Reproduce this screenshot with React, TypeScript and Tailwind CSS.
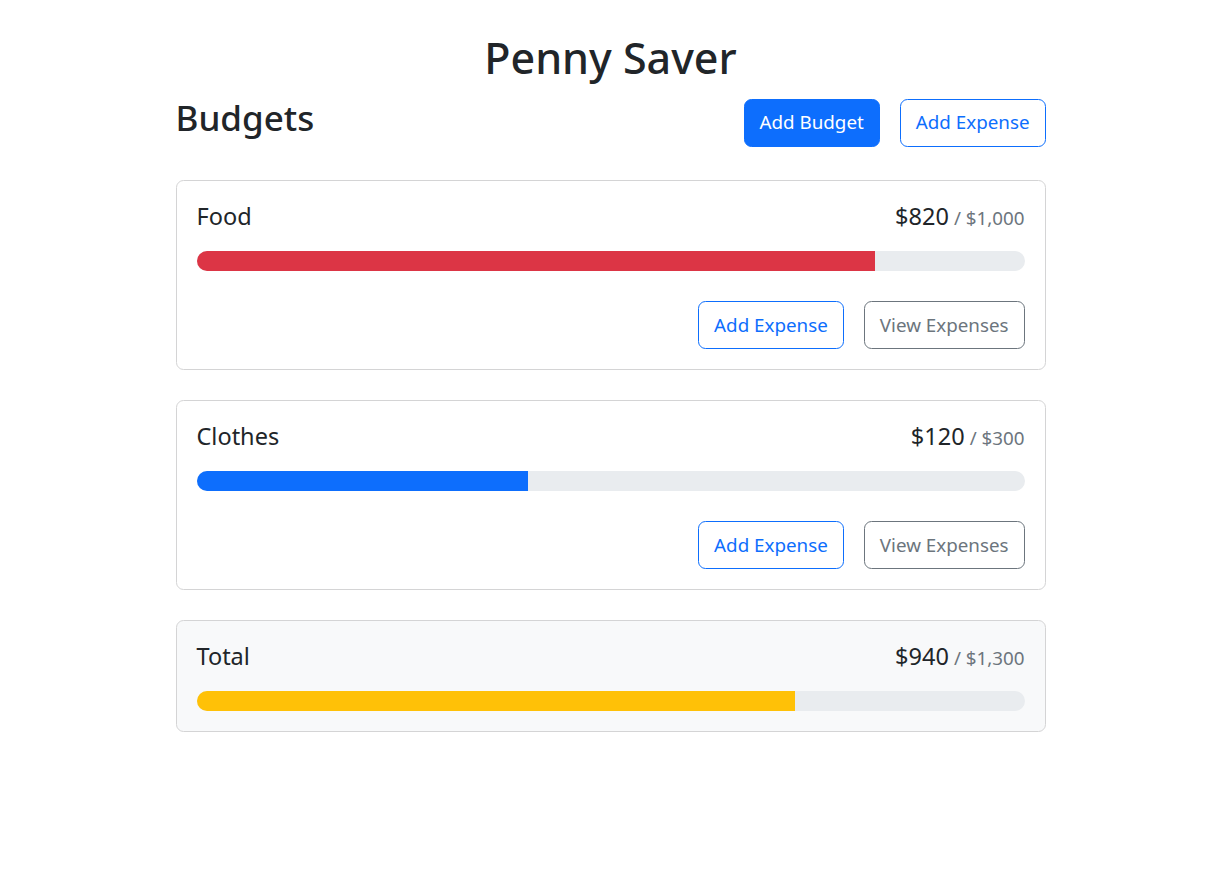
import React from 'react';

interface Budget {
  name: string;
  amount: number;
  max: number;
  variant: 'danger' | 'primary' | 'warning';
  gray?: boolean;
  hideButtons?: boolean;
}

const fmt = (n: number) =>
  new Intl.NumberFormat('en-US', { style: 'currency', currency: 'USD', minimumFractionDigits: 0 }).format(n);

const barColor = {
  danger: 'bg-[#dc3545]',
  primary: 'bg-[#0d6efd]',
  warning: 'bg-[#ffc107]',
};

function BudgetCard({ name, amount, max, variant, gray, hideButtons }: Budget) {
  return (
    <div
      className={`rounded-[7.5px] border border-[#d4d4d5] p-5 ${gray ? 'bg-[#f8f9fa]' : 'bg-white'}`}
    >
      <div className="mb-5 flex h-[30px] items-baseline justify-between text-[23.5px] leading-[30px]">
        <div className="mr-[10px]">{name}</div>
        <div className="flex items-baseline">
          {fmt(amount)}
          <span className="ml-[5px] text-[18.8px] leading-[24px] text-[#6c757d]">/ {fmt(max)}</span>
        </div>
      </div>
      <div className="h-5 overflow-hidden rounded-full bg-[#e9ecef]">
        <div className={`h-full ${barColor[variant]}`} style={{ width: `${(amount / max) * 100}%` }} />
      </div>
      {!hideButtons && (
        <div className="mt-[30px] flex items-center justify-end gap-5">
          <button className="h-12 rounded-[7.5px] border border-[#0d6efd] px-[15px] text-[18.8px] text-[#0d6efd]">
            Add Expense
          </button>
          <button className="h-12 rounded-[7.5px] border border-[#6c757d] px-[15px] text-[18.8px] text-[#6c757d]">
            View Expenses
          </button>
        </div>
      )}
    </div>
  );
}

export default function App() {
  return (
    <div
      className="min-h-screen bg-white text-[18.8px] text-[#212529]"
      style={{ fontFamily: '"Noto Sans", "Open Sans", sans-serif' }}
    >
      <div className="mx-auto w-[870px] py-[30px]">
        <h1 className="mb-[10px] h-[55px] text-center text-[43px] font-medium leading-[55px]">Penny Saver</h1>
        <div className="mb-[30px] flex h-[55px] items-center gap-5">
          <h2 className="mr-auto mb-[10px] text-[35px] font-medium leading-[45px]">Budgets</h2>
          <button className="h-12 rounded-[7.5px] border border-[#0d6efd] bg-[#0d6efd] px-[15px] text-[18.8px] text-white">
            Add Budget
          </button>
          <button className="h-12 rounded-[7.5px] border border-[#0d6efd] px-[15px] text-[18.8px] text-[#0d6efd]">
            Add Expense
          </button>
        </div>
        <div className="flex flex-col gap-[30px]">
          <BudgetCard name="Food" amount={820} max={1000} variant="danger" />
          <BudgetCard name="Clothes" amount={120} max={300} variant="primary" />
          <BudgetCard name="Total" amount={940} max={1300} variant="warning" gray hideButtons />
        </div>
      </div>
    </div>
  );
}
